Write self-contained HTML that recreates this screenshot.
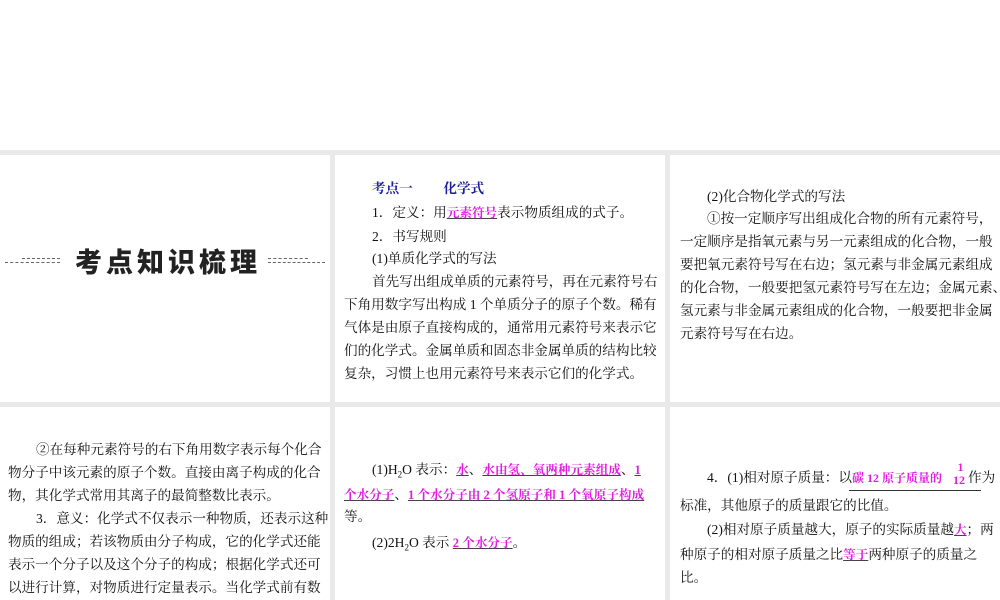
<!DOCTYPE html>
<html><head><meta charset="utf-8"><style>
body{margin:0;width:1000px;height:600px;background:#fff;position:relative;overflow:hidden;font-family:"Liberation Serif","Noto Serif CJK SC",serif;font-size:13.6px;color:#111}
.g{position:absolute;background:#e9e9e9}
.l{position:absolute;white-space:nowrap;line-height:16px}
.m{color:#e01ee0;font-weight:bold;text-decoration:underline;text-decoration-color:#444;font-size:12.6px}
.b{color:#1c1c9c;font-weight:bold}
.t{position:absolute;left:75px;top:241px;font-family:"Noto Sans CJK SC",sans-serif;font-weight:900;font-size:27px;letter-spacing:4px;color:#222}
.d{position:absolute;top:262px;border-top:1px dashed #666;height:0}
</style></head><body>
<div class="g" style="left:0;top:150px;width:1000px;height:5px"></div>
<div class="g" style="left:0;top:402px;width:1000px;height:5px"></div>
<div class="g" style="left:330px;top:150px;width:5px;height:450px"></div>
<div class="g" style="left:665px;top:150px;width:5px;height:450px"></div>

<div class="d" style="left:5px;width:55px"></div>
<div class="d" style="left:22px;width:38px;top:258px"></div>
<div class="t">考点知识梳理</div>
<div class="d" style="left:268px;width:57px"></div>
<div class="d" style="left:268px;width:40px;top:258px"></div>

<div class="l b" style="left:372px;top:181px">考点一&nbsp;&nbsp;&nbsp;&nbsp;&nbsp;&nbsp;&nbsp;&nbsp;&nbsp;化学式</div>
<div class="l" style="left:372px;top:205px">1．定义：用<span class="m">元素符号</span>表示物质组成的式子。</div>
<div class="l" style="left:372px;top:229px">2．书写规则</div>
<div class="l" style="left:372px;top:251px">(1)单质化学式的写法</div>
<div class="l" style="left:372px;top:274px">首先写出组成单质的元素符号，再在元素符号右</div>
<div class="l" style="left:344px;top:297px">下角用数字写出构成 1 个单质分子的原子个数。稀有</div>
<div class="l" style="left:344px;top:320px">气体是由原子直接构成的，通常用元素符号来表示它</div>
<div class="l" style="left:344px;top:343px">们的化学式。金属单质和固态非金属单质的结构比较</div>
<div class="l" style="left:344px;top:366px">复杂，习惯上也用元素符号来表示它们的化学式。</div>

<div class="l" style="left:707px;top:189px">(2)化合物化学式的写法</div>
<div class="l" style="left:707px;top:211px">①按一定顺序写出组成化合物的所有元素符号，</div>
<div class="l" style="left:680px;top:234px">一定顺序是指氧元素与另一元素组成的化合物，一般</div>
<div class="l" style="left:680px;top:257px">要把氧元素符号写在右边；氢元素与非金属元素组成</div>
<div class="l" style="left:680px;top:280px">的化合物，一般要把氢元素符号写在左边；金属元素、</div>
<div class="l" style="left:680px;top:303px">氢元素与非金属元素组成的化合物，一般要把非金属</div>
<div class="l" style="left:680px;top:326px">元素符号写在右边。</div>

<div class="l" style="left:36px;top:442px">②在每种元素符号的右下角用数字表示每个化合</div>
<div class="l" style="left:8px;top:465px">物分子中该元素的原子个数。直接由离子构成的化合</div>
<div class="l" style="left:8px;top:488px">物，其化学式常用其离子的最简整数比表示。</div>
<div class="l" style="left:36px;top:511px">3．意义：化学式不仅表示一种物质，还表示这种</div>
<div class="l" style="left:8px;top:534px">物质的组成；若该物质由分子构成，它的化学式还能</div>
<div class="l" style="left:8px;top:557px">表示一个分子以及这个分子的构成；根据化学式还可</div>
<div class="l" style="left:8px;top:580px">以进行计算，对物质进行定量表示。当化学式前有数</div>

<div class="l" style="left:372px;top:462px">(1)H<sub style="font-size:9px">2</sub>O 表示：<span class="m">水</span>、<span class="m">水由氢、氧两种元素组成</span>、<span class="m">1</span></div>
<div class="l" style="left:344px;top:487px"><span class="m">个水分子</span>、<span class="m">1 个水分子由 2 个氢原子和 1 个氧原子构成</span></div>
<div class="l" style="left:344px;top:509px">等。</div>
<div class="l" style="left:372px;top:535px">(2)2H<sub style="font-size:9px">2</sub>O 表示 <span class="m">2 个水分子</span>。</div>

<div class="l" style="left:707px;top:470px">4．(1)相对原子质量：以<span class="m" style="text-decoration:none;font-size:12px">碳 12 原子质量的</span></div>
<div style="position:absolute;left:849px;top:490px;width:132px;border-top:1px solid #333"></div>
<div class="l" style="left:953px;top:461px;font-size:12px;color:#e01ee0;font-weight:bold;text-align:center;line-height:13px">&nbsp;1<br>12</div>
<div class="l" style="left:968px;top:470px">作为</div>
<div class="l" style="left:680px;top:498px">标准，其他原子的质量跟它的比值。</div>
<div class="l" style="left:707px;top:522px">(2)相对原子质量越大，原子的实际质量越<span class="m">大</span>；两</div>
<div class="l" style="left:680px;top:547px">种原子的相对原子质量之比<span class="m">等于</span>两种原子的质量之</div>
<div class="l" style="left:680px;top:570px">比。</div>
</body></html>
